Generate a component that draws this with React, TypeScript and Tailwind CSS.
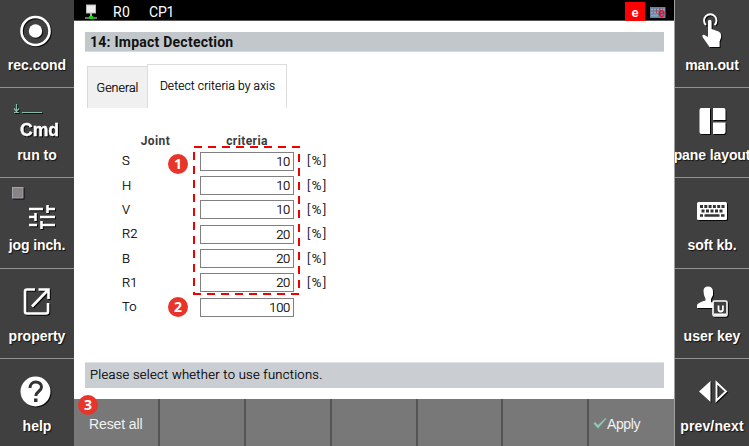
import React from "react";

const shadow = "drop-shadow-[1px_1px_0.5px_rgba(0,0,0,0.85)]";

type CellProps = { label: string; size: string; track?: string; children: React.ReactNode };

function Cell({ label, size, track = "", children }: CellProps) {
  return (
    <div className={`flex flex-col items-center overflow-hidden border-[#929292] ${size}`}>
      <svg viewBox="0 0 74 58" className={`h-[58px] w-[74px] shrink-0 ${shadow}`} fill="none" stroke="none">
        {children}
      </svg>
      <div className={`h-4 shrink-0 text-center text-[14px] leading-[18px] font-bold whitespace-nowrap text-white [text-shadow:1px_1px_1px_#111] ${track}`}>
        {label}
      </div>
    </div>
  );
}

function Badge({ n, place }: { n: string; place: string }) {
  return (
    <div className={`absolute flex h-5 w-5 items-center justify-center rounded-full bg-[#e73529] font-['Open_Sans',sans-serif] text-[14px] leading-5 font-bold text-white ${place}`}>
      {n}
    </div>
  );
}

const rows: [string, string][] = [
  ["S", "10"],
  ["H", "10"],
  ["V", "10"],
  ["R2", "20"],
  ["B", "20"],
  ["R1", "20"],
  ["To", "100"],
];

const first = "h-[88px] border-b [&>svg]:-mt-[2px]";

export default function App() {
  return (
    <div className="relative flex h-[446px] w-[749px] overflow-hidden bg-white font-['Liberation_Sans',Arial,sans-serif]">
      <aside className="flex w-[74px] shrink-0 flex-col bg-[#404040]">
        <Cell label="rec.cond" size={first}>
          <circle cx="35.500" cy="33" r="14" stroke="#fff" strokeWidth="2.600" />
          <circle cx="35.500" cy="33" r="6.700" fill="#fff" />
        </Cell>
        <Cell label="run to" size="h-[90px] border-b">
          <path d="M16.500 16v7M14 20.500l2.500 3 2.500-3M14 24.500h5M22 24.500h20" stroke="#84bea9" strokeWidth="1.200" />
          <text x="39.500" y="48" textAnchor="middle" fill="#fff" stroke="#fff" strokeWidth="0.400" fontFamily="Liberation Sans" fontSize="18.500" fontWeight="700" textLength="39" lengthAdjust="spacingAndGlyphs">Cmd</text>
        </Cell>
        <Cell label="jog inch." size="h-[91px] border-b" track="tracking-[-0.1px]">
          <rect x="12.500" y="9.500" width="10.500" height="10.500" fill="#898387" stroke="#a4a5ab" />
          <path d="M29 31h14M47 31h8M47.500 27v8M29 39h6M35.500 35v8M40 39h15M29 47h8M41 47h14M41.500 43v8" stroke="#fff" strokeWidth="2.600" />
        </Cell>
        <Cell label="property" size="h-[90px] border-b">
          <path d="M35 20.500H27a2 2 0 0 0-2 2v20a2 2 0 0 0 2 2h19a2 2 0 0 0 2-2V34M38.500 20.500h10V30M48 21L32 37.500" stroke="#fff" strokeWidth="2.600" />
        </Cell>
        <Cell label="help" size="h-[87px]">
          <circle cx="35.500" cy="32.500" r="15" fill="#fff" />
          <path d="M30 29c0-8 11.500-7.500 11.500-1 0 4.500-5.700 4.500-5.700 9" stroke="#333" strokeWidth="3" />
          <path d="M34 39.500h3.500v3.500H34z" fill="#333" />
        </Cell>
      </aside>

      <main className="flex w-[600px] shrink-0 flex-col font-[Roboto,sans-serif] text-[13px] text-[#101010]">
        <header className="flex h-[21px] shrink-0 border-b border-[#555] bg-black text-[14px] text-white">
          <svg className="ml-[10px] h-5 w-[16px]" viewBox="0 0 16 20">
            <rect x="2.500" y="5" width="9" height="8" fill="#eee" stroke="#bbb" />
            <path d="M7 13v4" stroke="#aaa" strokeWidth="2" />
            <path d="M1 18h12" stroke="#d5e6d5" />
            <rect x="5" y="16" width="4" height="3" fill="#00e000" />
          </svg>
          <span className="ml-[13px] h-5 w-[36px] pt-[2px] leading-5 tracking-[0.3px]">R0</span>
          <span className="pt-[2px] leading-5 tracking-[-0.2px]">CP1</span>
          <span className="mt-[2px] ml-auto h-[19px] w-5 bg-[#fe0000] text-center font-['Liberation_Sans',Arial] text-[13px] leading-[21px] font-bold">e</span>
          <svg className="mt-[7px] mr-[8px] ml-[5px] h-[11px] w-4 overflow-visible" viewBox="0 0 16 11">
            <rect width="15.500" height="11" fill="#69829f" />
            <path d="M1 2.500h14M1 5.500h7" stroke="#a6a0bb" strokeDasharray="2 1" strokeWidth="1.500" />
            <path d="M1 8.500h7" stroke="#83a5c8" strokeWidth="2" />
            <path d="M6.500 2v4M10 1v3" stroke="#a84464" />
            <text x="8.500" y="9.500" fill="#e90b20" fontFamily="Liberation Sans" fontSize="12" fontWeight="700">e</text>
          </svg>
        </header>

        <h1 className="mt-[11px] mr-[10px] ml-[11px] h-5 shrink-0 border-b border-[#d7dde1] bg-[#c2c7cb] pl-[5px] text-[14px] leading-[21px] font-bold tracking-[0.24px] text-[#111]">
          14: Impact Dectection
        </h1>

        <nav className="mt-3 ml-[13px] flex h-[44px] shrink-0 items-end">
          <div className="h-[42px] w-[60px] border-t border-l border-[#d9d9d9] bg-[#f0f0f0] text-center text-[12.500px] leading-[41px] font-light text-black [-webkit-text-stroke:0.2px_black]">General</div>
          <div className="h-[44px] w-[140px] border border-b-0 border-[#dcdcdc] bg-white pl-px text-center text-[12px] leading-[42px] font-light tracking-[0.12px] text-black [-webkit-text-stroke:0.2px_black]">Detect criteria by axis</div>
        </nav>

        <section className="mt-[26px] ml-[48px] flex h-[188px] shrink-0 flex-col">
          <div className="flex h-[15px] text-[12px] leading-[15px] font-bold tracking-[0.4px] text-[#3b3b3b]">
            <span className="w-[67px] text-center">Joint</span>
            <span className="ml-[11px] w-[94px] text-center">criteria</span>
          </div>
          {rows.map(([joint, value]) => (
            <div key={joint} className="flex h-[24.35px] shrink-0 items-center text-[13px] font-light text-black [-webkit-text-stroke:0.2px_black]">
              <span className="w-[78px]">{joint}</span>
              <input readOnly value={value} className="h-[19px] w-[94px] border border-[#808080] bg-white pr-[3px] text-right leading-4 tracking-[-0.3px] outline-none" />
              <span className="ml-[13px] tracking-[1.6px]">{joint === "To" ? "" : "[%]"}</span>
            </div>
          ))}
        </section>

        <p className="mt-auto mr-[10px] mb-[11px] ml-[11px] h-[26px] shrink-0 border-t border-[#e1e3e5] bg-[#cacdd2] pl-[5px] leading-[23px] font-light tracking-[0.27px] text-black [-webkit-text-stroke:0.2px_black]">
          Please select whether to use functions.
        </p>

        <footer className="flex h-[47px] w-[600px] shrink-0 bg-[#787878] font-['Liberation_Sans',Arial,sans-serif] text-[14px] leading-[51px] text-[#f2f2f2]">
          <div className="w-[86px] border-r-2 border-[#555] pl-[15px] tracking-[-0.1px] whitespace-nowrap">Reset all</div>
          <div className="w-[86px] border-r-2 border-[#555]" />
          <div className="w-[86px] border-r-2 border-[#555]" />
          <div className="w-[86px] border-r-2 border-[#555]" />
          <div className="w-[85px] border-r-2 border-[#555]" />
          <div className="w-[86px] border-r-2 border-[#555]" />
          <div className="flex pl-1">
            <svg className="mt-[18px] h-[13px] w-[14px]" viewBox="0 0 14 13">
              <path d="M0.500 6.500L2 5l3 3L12.500 1l1 0.500L5 11.500z" fill="#8fc8b4" />
            </svg>
            <span className="tracking-[-0.4px]">Apply</span>
          </div>
        </footer>
      </main>

      <aside className="flex w-[75px] shrink-0 flex-col border-l border-[#a0a0a0] bg-[#404040]">
        <Cell label="man.out" size={first} track="tracking-[-0.1px]">
          <path d="M31 27a6.200 6.200 0 1 1 8.500 0" stroke="#fff" strokeWidth="1.900" />
          <path d="M33 23.500a1.800 1.800 0 0 1 3.600 0V31l7 2.500q2.500 1 2.500 3.500v2.500l-1.500 4V49H34.500L27.500 39q-.8-3 2-2l3.500 2z" fill="#fff" />
        </Cell>
        <Cell label="pane layout" size="h-[90px] border-b" track="tracking-[-0.1px]">
          <path d="M26.500 20H35v26h-8.500a2 2 0 0 1-2-2V22a2 2 0 0 1 2-2zM38 20h10.500a2 2 0 0 1 2 2v10H38zM38 34.500h12.500V44a2 2 0 0 1-2 2H38z" fill="#fff" />
        </Cell>
        <Cell label="soft kb." size="h-[91px] border-b" track="tracking-[-0.1px]">
          <rect x="22" y="24" width="30" height="18" rx="1.500" fill="#fff" />
          <path d="M25 28.500h24.500" stroke="#333" strokeWidth="2.800" strokeDasharray="3 1.300" />
          <path d="M26.500 33h22" stroke="#333" strokeWidth="2.800" strokeDasharray="3 1.500" />
          <path d="M25 37.500h3M29.500 37.500H44.500M46 37.500h3.500" stroke="#333" strokeWidth="2.500" />
        </Cell>
        <Cell label="user key" size="h-[90px] border-b">
          <path d="M28.500 22q0-4.500 4.500-4.500t5 4.500v4l-2 4v3l3 1.500V39H22v-3q1-2.500 8.500-4.500V30l-1.500-4z" fill="#fff" />
          <rect x="38" y="32" width="14" height="15" rx="1.500" fill="#404040" stroke="#fff" strokeWidth="1.600" />
          <path d="M39 45.500h12" stroke="#fff" strokeWidth="2" />
          <path d="M43.500 36.500v4q0 2 2.200 2t2.200-2v-4" stroke="#fff" strokeWidth="1.800" />
        </Cell>
        <Cell label="prev/next" size="h-[87px]" track="tracking-[0.15px]">
          <path d="M35.500 22v21L24 32.500z" fill="#fff" />
          <path d="M41.500 23.500v18L51 32.500z" stroke="#fff" strokeWidth="1.900" />
        </Cell>
      </aside>

      <svg className="pointer-events-none absolute top-0 left-0 h-[330px] w-[310px]" viewBox="0 0 310 330">
        <g stroke="#f20000" strokeWidth="2" strokeDasharray="8 6" shapeRendering="crispEdges">
          <path d="M194 147H300M194 152V295M299 154V294M299 294H194" />
        </g>
      </svg>
      <Badge n="1" place="left-[168px] top-[154px]" />
      <Badge n="2" place="left-[168px] top-[297px]" />
      <Badge n="3" place="left-[78px] top-[395px]" />
    </div>
  );
}
